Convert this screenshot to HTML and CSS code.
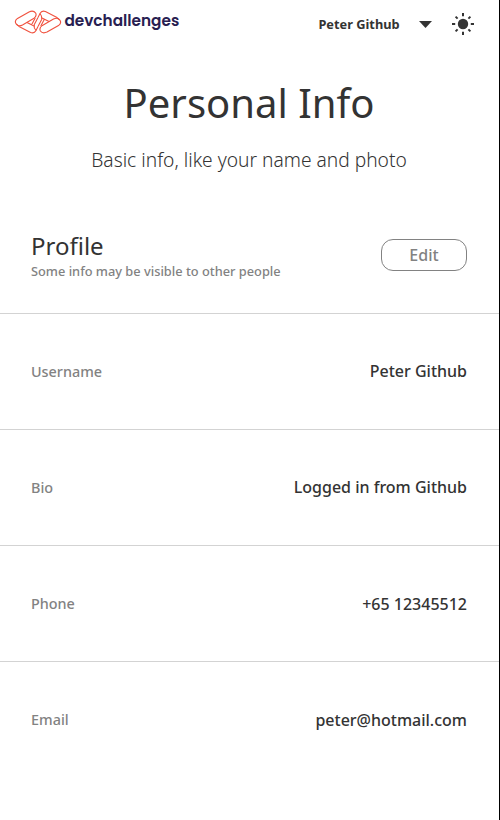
FILE: index.html
```html
<!DOCTYPE html>
<html lang="en"><head><meta charset="utf-8"><title>Personal Info</title><link rel="stylesheet" href="styles.css"></head>
<body>
<header class="topbar">
<div class="brand"><svg class="logo" width="48" height="24" viewBox="0 0 48 24"><defs><g id="half">
<path d="M3.5 8.4L15 1.9Q19.5 0 21.6 3Q23.2 6.2 19.6 8.6L8.5 15Q4.5 17 2.2 14Q0 11 3.5 8.4Z"/>
<path d="M2.2 14L5 16.4L16.6 22.4Q20.2 23.8 22 20.5L24 16.6M13 12.5L20.5 16.2M17.6 14.8L21.2 8"/></g></defs>
<use href="#half"/><use href="#half" transform="rotate(180 24 12)"/><path d="M24 7.4L20.2 14.8Q19.6 17.6 22 20.5M24 16.6L27.8 9.2Q28.4 6.4 26 3.5"/></svg><span class="wordmark">devchallenges</span></div>
<div class="user"><span class="name">Peter Github</span><svg class="caret" width="13" height="7" viewBox="0 0 13 7"><path d="M0 0H13L6.5 7Z"/></svg>
<svg class="sun" width="24" height="24" viewBox="0 0 24 24"><circle cx="12" cy="12" r="5.2"/><path d="M12 1V4.2M12 19.8V23M1 12H4.2M19.8 12H23M4.6 4.6L6.6 6.6M17.4 17.4L19.4 19.4M19.4 4.6L17.4 6.6M6.6 17.4L4.6 19.4"/></svg></div>
</header>
<main>
<section class="intro"><h1>Personal Info</h1><p>Basic info, like your name and photo</p></section>
<section class="profile"><div><h2>Profile</h2><p>Some info may be visible to other people</p></div><button class="edit">Edit</button></section>
<dl class="rows">
<div class="row"><dt>Username</dt><dd>Peter Github</dd></div>
<div class="row"><dt>Bio</dt><dd>Logged in from Github</dd></div>
<div class="row"><dt>Phone</dt><dd>+65 12345512</dd></div>
<div class="row"><dt>Email</dt><dd>peter@hotmail.com</dd></div>
</dl>
</main>
</body></html>
```
FILE: styles.css
```css
* { box-sizing: border-box; margin: 0; }
body { font-family: "Noto Sans", sans-serif; color: #333; background: #fff; border-right: 1px solid #000; height: 820px; overflow: hidden; }
.topbar { height: 48px; display: flex; justify-content: space-between; padding: 0 24px 0 14px; align-items: center; }
.brand, .user { display: flex; align-items: center; }
.brand { margin-top: -4px; }
.logo { fill: none; stroke: #f0523f; stroke-width: 1.1; stroke-linejoin: round; }
.wordmark { font-family: Poppins, Lato, sans-serif; font-weight: 600; font-size: 15.3px; color: #282051; margin-left: 2.4px; line-height: 22px; margin-top: -2px; }
.name { font-size: 12.8px; font-weight: 700; margin-right: 19.4px; }
.caret { margin-right: 19px; fill: #333; }
.sun { fill: #333; stroke: #333; }
.sun path { stroke-width: 2; }
.sun circle { stroke: none; }
.intro { text-align: center; height: 154px; padding-top: 28px; }
h1 { font-size: 40px; font-weight: 400; line-height: 54px; margin-right: 1px; }
.intro p { font-size: 19.2px; font-weight: 300; line-height: 25px; margin: 17px 1px 0 0; }
.profile { height: 112px; padding: 27px 32px 0 31px; display: flex; justify-content: space-between; border-bottom: 1px solid #d3d3d3; }
h2 { font-size: 24px; font-weight: 400; line-height: 33px; }
.profile p { font-size: 12.8px; font-weight: 500; color: #828282; line-height: 18px; }
.edit { font: 500 16px "Noto Sans", sans-serif; width: 86px; height: 32px; border: 1px solid #828282; border-radius: 12px; background: #fff; color: #828282; margin-top: 10px; }
.row { height: 116px; display: flex; align-items: center; justify-content: space-between; padding: 0 32px 0 31px; border-bottom: 1px solid #d3d3d3; }
.row:last-child { border: 0; padding-bottom: 1px; }
dt { font-size: 14.4px; font-weight: 500; color: #828282; }
dd { font-size: 16px; font-weight: 500; }
.row:nth-child(-n+2) dd { padding-bottom: 2px; }
```
